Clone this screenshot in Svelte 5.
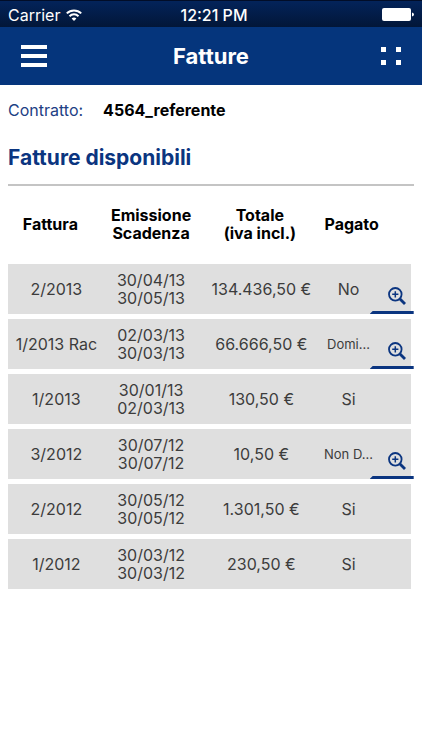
<script lang="ts">
  type Invoice = {
    number: string;
    issued: string;
    due: string;
    total: string;
    paid: string;
    detail?: boolean;
  };

  const contract = '4564_referente';

  const invoices: Invoice[] = [
    { number: '2/2013', issued: '30/04/13', due: '30/05/13', total: '134.436,50 €', paid: 'No', detail: true },
    { number: '1/2013 Rac', issued: '02/03/13', due: '30/03/13', total: '66.666,50 €', paid: 'Domi...', detail: true },
    { number: '1/2013', issued: '30/01/13', due: '02/03/13', total: '130,50 €', paid: 'Si' },
    { number: '3/2012', issued: '30/07/12', due: '30/07/12', total: '10,50 €', paid: 'Non D...', detail: true },
    { number: '2/2012', issued: '30/05/12', due: '30/05/12', total: '1.301,50 €', paid: 'Si' },
    { number: '1/2012', issued: '30/03/12', due: '30/03/12', total: '230,50 €', paid: 'Si' },
  ];
</script>

<div class="status-bar">
  <div class="carrier">
    <span>Carrier</span>
    <svg width="16" height="12" viewBox="0 0 16 12" aria-hidden="true">
      <path d="M.8 4.4a10.2 10.2 0 0 1 14.4 0" fill="none" stroke="#fff" stroke-width="2" />
      <path d="M3.5 7.2a6.4 6.4 0 0 1 9 0" fill="none" stroke="#fff" stroke-width="2" />
      <path d="M8 12 5.6 9.6a3.4 3.4 0 0 1 4.8 0z" fill="#fff" />
    </svg>
  </div>
  <span class="clock">12:21 PM</span>
  <svg class="battery" width="32" height="13" viewBox="0 0 32 13" aria-hidden="true">
    <rect width="29" height="13" rx="2" fill="#fff" />
    <path d="M30 4.5q2 .6 2 2t-2 2z" fill="#fff" />
  </svg>
</div>

<header>
  <button class="icon-btn" aria-label="Menu">
    <svg width="26" height="24" viewBox="0 0 26 24" fill="#fff">
      <rect y="1" width="26" height="4" />
      <rect y="10" width="26" height="4" />
      <rect y="19" width="26" height="4" />
    </svg>
  </button>
  <h1>Fatture</h1>
  <button class="icon-btn services" aria-label="Servizi">
    <svg width="20" height="18" viewBox="0 0 20 18" fill="#fff">
      <rect width="5" height="5" />
      <rect x="15" width="5" height="5" />
      <rect y="13" width="5" height="5" />
      <rect x="15" y="13" width="5" height="5" />
    </svg>
  </button>
</header>

<main>
  <p class="contract">
    <span>Contratto:</span>
    <strong>{contract}</strong>
  </p>

  <h2>Fatture disponibili</h2>

  <table>
    <colgroup>
      <col class="c-number" />
      <col class="c-dates" />
      <col class="c-total" />
      <col class="c-paid" />
      <col />
    </colgroup>
    <thead>
      <tr>
        <th class="h-number">Fattura</th>
        <th>Emissione<br />Scadenza</th>
        <th>Totale<br />(iva incl.)</th>
        <th class="h-paid" colspan="2">Pagato</th>
      </tr>
    </thead>
    <tbody>
      {#each invoices as inv (inv.number)}
        <tr>
          <td>{inv.number}</td>
          <td>{inv.issued}<br />{inv.due}</td>
          <td class="total">{inv.total}</td>
          <td class:small={inv.paid.length > 2}>{inv.paid}</td>
          <td class="action">
            {#if inv.detail}
              <button class="detail" aria-label={`Dettaglio fattura ${inv.number}`}>
                <svg width="18" height="18" viewBox="0 0 18 18" fill="none" stroke="#0b3580">
                  <circle cx="7.3" cy="7.3" r="6.3" stroke-width="1.8" />
                  <path d="M7.3 4.2v6.2M4.2 7.3h6.2" stroke-width="1.5" />
                  <path d="m12 12 5 5" stroke-width="2.8" />
                </svg>
              </button>
            {/if}
          </td>
        </tr>
      {/each}
    </tbody>
  </table>
</main>

<style>
  :global(body) {
    background: #fff;
    font-family: Inter, 'Liberation Sans', sans-serif;
    color: #000;
  }
  .status-bar {
    display: grid;
    grid-template-columns: 1fr auto 1fr;
    align-items: center;
    height: 27px;
    padding: 1px 8px 0;
    box-sizing: border-box;
    background: linear-gradient(#03235a, #021638);
    border-top: 1px solid #010d28;
    color: #fff;
    font-size: 16px;
  }
  .carrier {
    display: flex;
    align-items: center;
    gap: 6px;
  }
  .clock {
    padding-left: 6px;
    font-weight: 500;
  }
  .battery { justify-self: end; }
  header {
    display: flex;
    justify-content: space-between;
    align-items: center;
    height: 58px;
    padding: 0 21px;
    background: #05357c;
    color: #fff;
  }
  h1 {
    margin: 0;
    font-size: 22px;
    font-weight: 700;
  }
  .icon-btn {
    display: flex;
    justify-content: center;
    width: 26px;
    padding: 0;
    border: 0;
    background: transparent;
    cursor: pointer;
  }
  .services { justify-content: flex-end; }
  main { padding: 15px 11px 0 8px; }
  .contract {
    display: flex;
    gap: 20px;
    margin: 0;
    font-size: 16px;
    line-height: 20px;
  }
  .contract span { color: #1d4084; }
  .contract strong { font-weight: 700; }
  h2 {
    margin: 23px -3px 0 0;
    padding-bottom: 11px;
    border-bottom: 2px solid #c4c4c4;
    color: #0b3580;
    font-size: 21px;
    font-weight: 700;
    line-height: 30px;
  }
  table {
    width: 100%;
    table-layout: fixed;
    border-collapse: separate;
    border-spacing: 0 5px;
    font-size: 16px;
    line-height: 18px;
    text-align: center;
  }
  .c-number { width: 24%; }
  .c-dates { width: 23%; }
  .c-total { width: 31%; }
  .c-paid { width: 13%; }
  th {
    height: 68px;
    padding: 0 0 2px;
    box-sizing: border-box;
    font-weight: 700;
  }
  .h-number { padding-right: 12px; }
  .h-paid { padding-right: 30px; }
  td {
    height: 50px;
    padding: 0;
    background: #dfdfdf;
    color: #3c3c3c;
    white-space: nowrap;
  }
  .total { padding-left: 3px; }
  .small { font-size: 13px; }
  .action { vertical-align: bottom; }
  .detail {
    position: relative;
    display: flex;
    justify-content: center;
    width: 44px;
    height: 27px;
    margin: 0 -3px 0 -5px;
    padding: 0 0 0 10px;
    border: 0;
    background: transparent;
    cursor: pointer;
  }
  .detail::after {
    content: '';
    position: absolute;
    right: 0;
    bottom: 0;
    left: 0;
    height: 3px;
    background: #0b3580;
    clip-path: polygon(3px 0, 100% 0, 100% 100%, 0 100%);
  }
</style>
